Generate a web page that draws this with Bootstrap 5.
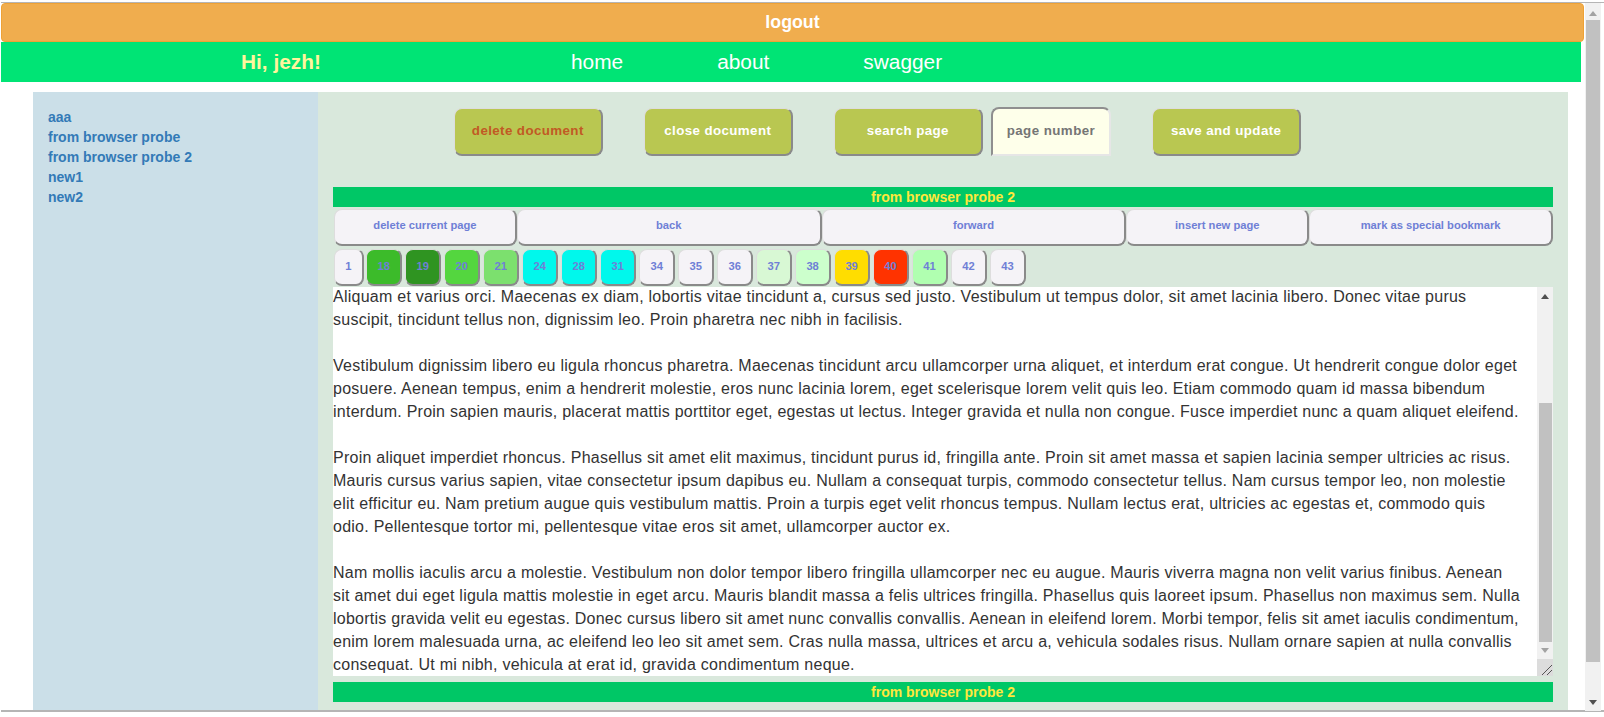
<!DOCTYPE html>
<html lang="en"><head><meta charset="utf-8"><title>Documents</title>
<link href="https://cdn.jsdelivr.net/npm/bootstrap@5.3.0/dist/css/bootstrap.min.css" rel="stylesheet">
<style>
html,body{height:717px;overflow:hidden;background:#fff;margin:0}
body{font-family:"Liberation Sans",Arial,sans-serif;color:#333}
.shell{margin:2px 0 0 1px;width:1603px;height:710px;border-top:1px solid #b5b5b5;border-bottom:2px solid #b5b5b5}
.pagearea{width:1583px;flex:none;overflow:hidden}
.logoutbtn{display:block;width:100%;height:39px;padding:0;background:#f0ad4e;border:1px solid #eea236;border-radius:4px;color:#fff;font-weight:700;font-size:17.8px}
.logoutbtn:hover{background:#f0ad4e;color:#fff;border-color:#eea236}
.topnav{width:1580px;height:40px;background:#00e475;font-size:20.85px}
.topnav .hi{margin-left:240px;width:330px;color:#fff59d;font-weight:700}
.topnav a{color:#fff;text-decoration:none;margin-right:94px}
.workspace{margin:10px 16px 0 32px;height:619px}
.sidecol{width:285px;flex:none;background:#cbdfe8;padding:15px 15px 0}
.sidecol a{display:block;color:#337ab7;font-weight:700;font-size:14px;line-height:20px;text-decoration:none}
.maincol{flex:1;background:#d9e8dc;padding:15px 15px 0}
.doctools{height:79px;margin-top:1px;padding-left:121px}
.softbtn{height:48px;border-style:solid;border-width:1px 2px 2px 1px;border-color:#ddd #8a8a8a #8a8a8a #ddd;border-radius:8px;padding:0 0 2px;font-weight:700;font-size:13.33px;letter-spacing:.4px;width:148.6px;color:#fff;background:#b9c751}
.softbtn:hover{background:#b9c751;color:#fff;border-color:#ddd #8a8a8a #8a8a8a #ddd}
.softbtn.danger{color:#c15a24}
.softbtn.danger:hover{color:#c15a24}
.softbtn.farleft{margin-right:41.4px}
.softbtn.nearleft{margin-right:8.4px}
.pagefield{width:120px;height:49px;margin:-1px 41.4px 0 0;text-align:center;background:#feffea;border-style:solid;border-width:2px 0 0 2px;border-color:#8f8f8f #e4e4e4 #e4e4e4 #8f8f8f;border-bottom:2px solid #e6e6e6;border-right:2px solid #e6e6e6;border-radius:8px 8px 0 0;font-weight:700;font-size:13.33px;letter-spacing:.45px;padding:0 0 2px;outline:none}
.pagefield::placeholder{color:#757575;opacity:1}
.titlebar{height:20px;background:#00c766;color:#ffe83c;font-weight:700;font-size:14px;line-height:20px;text-align:center}
.actionrow{height:42px;padding:2px 0 3px 1px}
.softlink{height:37px;border-style:solid;border-width:1px 2px 2px 1px;border-color:#ddd #8a8a8a #8a8a8a #ddd;border-radius:8px;padding:0 0 4px;background:#f5f3f7;color:#6f7fd6;font-weight:700;font-size:11.2px}
.softlink:hover{background:#f5f3f7;color:#6f7fd6;border-color:#ddd #8a8a8a #8a8a8a #ddd}
.w15{width:15%}.w25{width:25%}.w20{width:20%}
.pagerow{height:37px;padding:0 0 0 1px;gap:2.6px}
.softlink.num{width:36.4px;height:37px;flex:none;padding:0 0 1px}
.softlink.num.first{width:29.5px}
.c18{background:#3cbb2a!important}.c19{background:#2f9421!important}.c20{background:#54d63f!important}.c21{background:#7ce06e!important}
.c24{background:#00f8ec!important}.c37{background:#d8f8d4!important}.c38{background:#ccffcc!important}.c39{background:#ffdd00!important}.c40{background:#ff3300!important}.c41{background:#b0ffb0!important}
.docbody{height:389px;background:#fff;margin-top:1px}
.doctext{width:1204px;flex:none;font-size:16px;letter-spacing:.25px;line-height:23px;white-space:pre;color:#333;overflow:hidden;margin:-2px 0 0}
.vtrack{width:16px;flex:none;background:#f1f1f1;position:relative}
.vtrack .thumb{position:absolute;left:2px;right:1px;top:116px;height:239px;background:#c1c1c1}
.vtrack .up,.vtrack .down{position:absolute;left:4px;width:0;height:0;border-left:4px solid transparent;border-right:4px solid transparent}
.vtrack .up{top:7px;border-bottom:5px solid #505050}
.vtrack .down{top:361px;border-top:5px solid #a3a3a3}
.vtrack .grip{position:absolute;left:0;right:0;bottom:0;height:17px;background:#dcdcdc}
.vtrack .grip svg{display:block;position:absolute;right:0;bottom:0}
.bottombar{margin-top:6px}
.pagebar{width:16px;flex:none;background:#f1f1f1;position:relative;margin-left:1px;height:708px}
.pagebar .thumb{position:absolute;left:1px;right:1px;top:17px;height:642px;background:#c1c1c1}
.pagebar .up,.pagebar .down{position:absolute;left:4px;width:0;height:0;border-left:4px solid transparent;border-right:4px solid transparent}
.pagebar .up{top:8px;border-bottom:5px solid #a3a3a3}
.pagebar .down{bottom:6px;border-top:5px solid #505050}
</style></head>
<body>
<div class="shell d-flex">
  <div class="pagearea">
    <button class="btn logoutbtn" type="button">logout</button>
    <nav class="topnav d-flex align-items-center">
      <span class="hi">Hi, jezh!</span>
      <a href="#">home</a><a href="#">about</a><a href="#">swagger</a>
    </nav>
    <div class="workspace d-flex">
      <aside class="sidecol">
        <a href="#">aaa</a><a href="#">from browser probe</a><a href="#">from browser probe 2</a><a href="#">new1</a><a href="#">new2</a>
      </aside>
      <main class="maincol">
        <div class="doctools d-flex align-items-start">
          <button class="btn softbtn danger farleft" type="button">delete document</button>
          <button class="btn softbtn farleft" type="button">close document</button>
          <button class="btn softbtn nearleft" type="button">search page</button>
          <input class="pagefield" type="text" placeholder="page number">
          <button class="btn softbtn" type="button">save and update</button>
        </div>
        <div class="titlebar">from browser probe 2</div>
        <div class="actionrow d-flex">
          <button class="btn softlink w15" type="button">delete current page</button>
          <button class="btn softlink w25" type="button">back</button>
          <button class="btn softlink w25" type="button">forward</button>
          <button class="btn softlink w15" type="button">insert new page</button>
          <button class="btn softlink w20" type="button">mark as special bookmark</button>
        </div>
        <div class="pagerow d-flex">
          <button class="btn softlink num first" type="button">1</button>
          <button class="btn softlink num c18" type="button">18</button>
          <button class="btn softlink num c19" type="button">19</button>
          <button class="btn softlink num c20" type="button">20</button>
          <button class="btn softlink num c21" type="button">21</button>
          <button class="btn softlink num c24" type="button">24</button>
          <button class="btn softlink num c24" type="button">28</button>
          <button class="btn softlink num c24" type="button">31</button>
          <button class="btn softlink num" type="button">34</button>
          <button class="btn softlink num" type="button">35</button>
          <button class="btn softlink num" type="button">36</button>
          <button class="btn softlink num c37" type="button">37</button>
          <button class="btn softlink num c38" type="button">38</button>
          <button class="btn softlink num c39" type="button">39</button>
          <button class="btn softlink num c40" type="button">40</button>
          <button class="btn softlink num c41" type="button">41</button>
          <button class="btn softlink num" type="button">42</button>
          <button class="btn softlink num" type="button">43</button>
        </div>
        <div class="docbody d-flex">
<p class="doctext">Aliquam et varius orci. Maecenas ex diam, lobortis vitae tincidunt a, cursus sed justo. Vestibulum ut tempus dolor, sit amet lacinia libero. Donec vitae purus
suscipit, tincidunt tellus non, dignissim leo. Proin pharetra nec nibh in facilisis.

Vestibulum dignissim libero eu ligula rhoncus pharetra. Maecenas tincidunt arcu ullamcorper urna aliquet, et interdum erat congue. Ut hendrerit congue dolor eget
posuere. Aenean tempus, enim a hendrerit molestie, eros nunc lacinia lorem, eget scelerisque lorem velit quis leo. Etiam commodo quam id massa bibendum
interdum. Proin sapien mauris, placerat mattis porttitor eget, egestas ut lectus. Integer gravida et nulla non congue. Fusce imperdiet nunc a quam aliquet eleifend.

Proin aliquet imperdiet rhoncus. Phasellus sit amet elit maximus, tincidunt purus id, fringilla ante. Proin sit amet massa et sapien lacinia semper ultricies ac risus.
Mauris cursus varius sapien, vitae consectetur ipsum dapibus eu. Nullam a consequat turpis, commodo consectetur tellus. Nam cursus tempor leo, non molestie
elit efficitur eu. Nam pretium augue quis vestibulum mattis. Proin a turpis eget velit rhoncus tempus. Nullam lectus erat, ultricies ac egestas et, commodo quis
odio. Pellentesque tortor mi, pellentesque vitae eros sit amet, ullamcorper auctor ex.

Nam mollis iaculis arcu a molestie. Vestibulum non dolor tempor libero fringilla ullamcorper nec eu augue. Mauris viverra magna non velit varius finibus. Aenean
sit amet dui eget ligula mattis molestie in eget arcu. Mauris blandit massa a felis ultrices fringilla. Phasellus quis laoreet ipsum. Phasellus non maximus sem. Nulla
lobortis gravida velit eu egestas. Donec cursus libero sit amet nunc convallis convallis. Aenean in eleifend lorem. Morbi tempor, felis sit amet iaculis condimentum,
enim lorem malesuada urna, ac eleifend leo leo sit amet sem. Cras nulla massa, ultrices et arcu a, vehicula sodales risus. Nullam ornare sapien at nulla convallis
consequat. Ut mi nibh, vehicula at erat id, gravida condimentum neque.</p>
          <div class="vtrack">
            <span class="up"></span><span class="thumb"></span><span class="down"></span>
            <span class="grip"><svg width="14" height="14" viewBox="0 0 14 14"><path d="M3 13 13 3M8 13 13 8" stroke="#555" stroke-width="1" fill="none"/></svg></span>
          </div>
        </div>
        <div class="titlebar bottombar">from browser probe 2</div>
      </main>
    </div>
  </div>
  <div class="pagebar"><span class="up"></span><span class="thumb"></span><span class="down"></span></div>
</div>
<script src="https://cdn.jsdelivr.net/npm/bootstrap@5.3.0/dist/js/bootstrap.bundle.min.js"></script>
</body></html>
